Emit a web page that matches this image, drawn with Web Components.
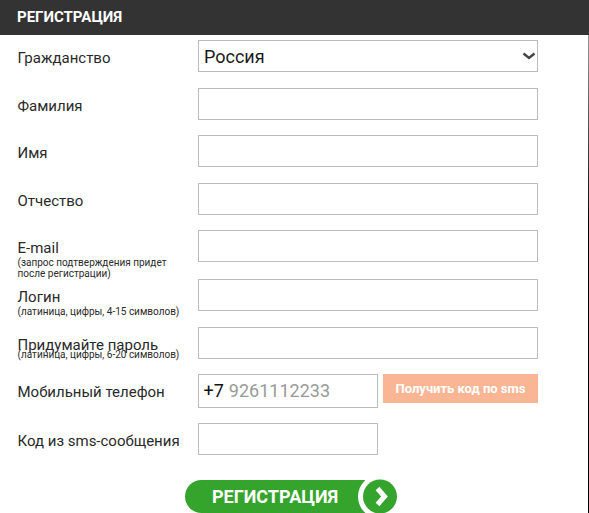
<!DOCTYPE html>
<html lang="ru">
<head>
<meta charset="utf-8">
<title>Регистрация</title>
<style>
  html, body { margin: 0; padding: 0; background: #fff; }
  body { font-family: Roboto, "Liberation Sans", sans-serif; color: #222; overflow: hidden; }
</style>
</head>
<body>

<template id="tpl-form">
  <style>
    :host { display: block; width: 589px; height: 513px; overflow: hidden; }
    header { height: 35px; background: #333; color: #fff; font: 700 15px/35px Roboto, sans-serif; padding-left: 17px; }
    main { display: flex; flex-direction: column; padding-top: 5px; height: 478px; box-sizing: border-box; border-right: 1px solid; border-image: linear-gradient(#999, #000 40%) 1; }
  </style>
  <header><slot name="title"></slot></header>
  <main><slot></slot></main>
</template>

<template id="tpl-row">
  <style>
    :host { display: grid; grid-template-columns: 180.5px 1fr; padding-left: 17.5px; box-sizing: border-box; align-items: start; }
    .label { font-size: 15px; line-height: 17px; color: #2a2a2a; padding-top: 10px; }
    .hint { display: block; font-size: 10px; line-height: 11px; color: #2a2a2a; }
    :host([tight]) .hint { margin-top: -5px; }
  </style>
  <div class="label"><slot></slot><span class="hint"><slot name="hint"></slot></span></div>
  <div class="ctl"><slot name="control"></slot></div>
</template>

<template id="tpl-input">
  <style>
    :host { display: block; width: 340px; }
    :host([short]) { width: 180px; }
    input { display: block; width: 100%; height: 32px; box-sizing: border-box; border: 1px solid #bbb; background: #fff; margin: 0; padding: 0 5px; font: 18px Roboto, sans-serif; outline: 0; }
  </style>
  <input type="text">
</template>

<template id="tpl-select">
  <style>
    :host { display: block; width: 340px; position: relative; }
    select { appearance: none; display: block; width: 100%; height: 32px; box-sizing: border-box; border: 1px solid #bbb; border-radius: 0; background: #fff; color: #1a1a1a; margin: 0; padding: 0 20px 0 5px; font: 18px Roboto, sans-serif; outline: 0; }
    svg { position: absolute; right: 2px; top: 12px; width: 14px; height: 8px; pointer-events: none; }
  </style>
  <select><option>Россия</option></select>
  <svg viewBox="0 0 14 8" aria-hidden="true"><path d="M1.5 1.5 L7 6 L12.5 1.5" fill="none" stroke="#444" stroke-width="2.4"/></svg>
</template>

<template id="tpl-phone">
  <style>
    :host { display: flex; gap: 5px; align-items: flex-start; }
    .box { width: 180px; height: 34px; box-sizing: border-box; border: 1px solid #bbb; display: flex; align-items: center; padding-left: 4.5px; font-size: 18px; }
    .code { color: #111; }
    input { border: 0; outline: 0; padding: 0; margin: 0 0 0 5px; width: 130px; font: 18px Roboto, sans-serif; background: transparent; }
    input::placeholder { color: #9a9a9a; opacity: 1; }
    .sms { width: 155px; height: 29px; border: 0; padding: 0; background: #fab594; color: #fff; font: 700 13px Roboto, sans-serif; }
  </style>
  <div class="box"><span class="code">+7</span><input type="tel" placeholder="9261112233"></div>
  <button class="sms" disabled><slot></slot></button>
</template>

<template id="tpl-submit">
  <style>
    :host { display: flex; justify-content: flex-start; margin: 25px 0 0 185px; }
    button { position: relative; display: block; width: 212px; height: 33px; border: 0; padding: 0 0 0 27px; border-radius: 17px; background: #35a42c; color: #fff; font: 700 18px/33px Roboto, sans-serif; text-align: left; }
    svg { position: absolute; right: 0; top: -1px; width: 40px; height: 35px; }
  </style>
  <button><slot></slot>
    <svg viewBox="0 0 40 35" aria-hidden="true">
      <circle cx="23" cy="17.5" r="22" fill="#fff"/>
      <rect x="23" y="0" width="17" height="35" fill="#fff"/>
      <circle cx="23" cy="17.5" r="17" fill="#35a42c"/>
      <path d="M20.5 9.5 L27.5 17.5 L20.5 25.5" fill="none" stroke="#fff" stroke-width="5"/>
    </svg>
  </button>
</template>

<script>
  const define = (name, tplId) => {
    customElements.define(name, class extends HTMLElement {
      constructor() {
        super();
        this.attachShadow({ mode: 'open' })
          .appendChild(document.getElementById(tplId).content.cloneNode(true));
      }
    });
  };
  define('reg-form', 'tpl-form');
  define('reg-row', 'tpl-row');
  define('reg-input', 'tpl-input');
  define('reg-select', 'tpl-select');
  define('reg-phone', 'tpl-phone');
  define('reg-submit', 'tpl-submit');
</script>

<reg-form>
  <span slot="title">РЕГИСТРАЦИЯ</span>
  <reg-row style="height:47.5px">Гражданство<reg-select slot="control"></reg-select></reg-row>
  <reg-row style="height:47.5px">Фамилия<reg-input slot="control"></reg-input></reg-row>
  <reg-row style="height:47.5px">Имя<reg-input slot="control"></reg-input></reg-row>
  <reg-row style="height:47.5px">Отчество<reg-input slot="control"></reg-input></reg-row>
  <reg-row style="height:48.5px">E-mail<span slot="hint">(запрос подтверждения придет<br>после регистрации)</span><reg-input slot="control"></reg-input></reg-row>
  <reg-row style="height:48px">Логин<span slot="hint">(латиница, цифры, 4-15 символов)</span><reg-input slot="control"></reg-input></reg-row>
  <reg-row style="height:47px" tight>Придумайте пароль<span slot="hint">(латиница, цифры, 6-20 символов)</span><reg-input slot="control"></reg-input></reg-row>
  <reg-row style="height:49px">Мобильный телефон<reg-phone slot="control">Получить код по sms</reg-phone></reg-row>
  <reg-row style="height:32px">Код из sms-сообщения<reg-input slot="control" short></reg-input></reg-row>
  <reg-submit>РЕГИСТРАЦИЯ</reg-submit>
</reg-form>

</body>
</html>
